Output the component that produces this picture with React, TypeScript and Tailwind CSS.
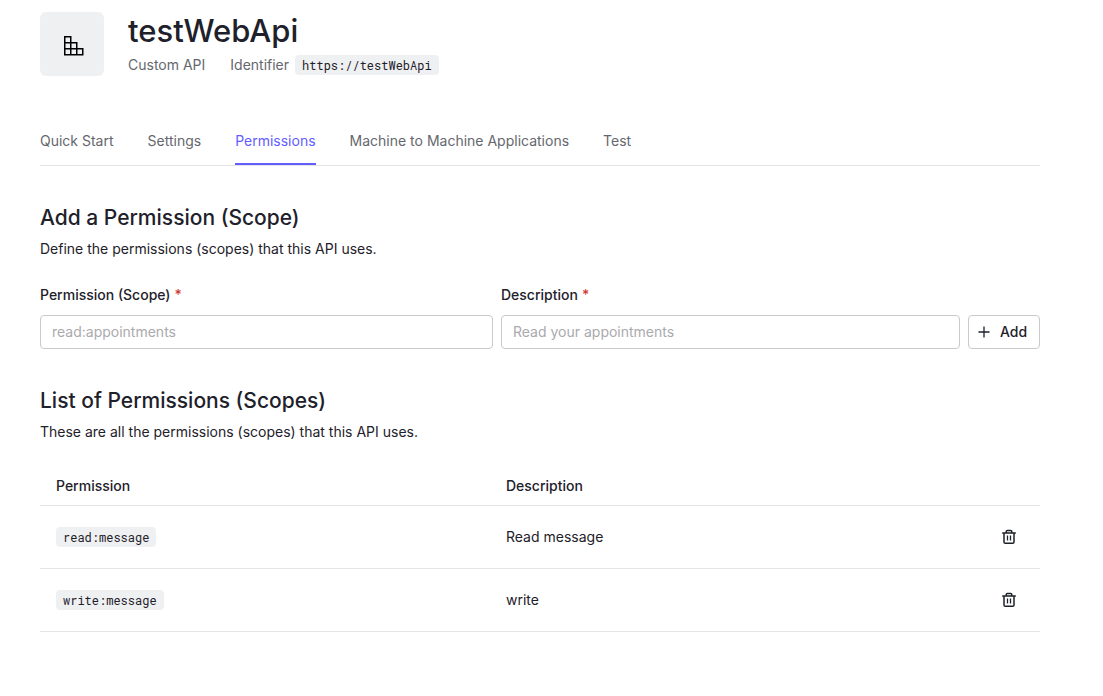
const tabs = ["Quick Start", "Settings", "Permissions", "Machine to Machine Applications", "Test"];

const permissions = [
  { scope: "read:message", description: "Read message" },
  { scope: "write:message", description: "write" },
];

function Code({ children }: { children: string }) {
  return (
    <code className="inline-block rounded bg-[#eff0f2] px-[7px] font-['Roboto_Mono','Liberation_Mono',monospace] text-xs leading-5 text-[#1e212a]">
      {children}
    </code>
  );
}

function ApiIcon() {
  return (
    <svg width="20" height="20" viewBox="0 0 20 20" fill="none" stroke="#000" strokeWidth="1.5" aria-hidden="true">
      <path d="M.75.75h6v18h-6zM.75 6.75h12v12M.75 12.75h18v6h-18zM12.75 12.75v6" />
    </svg>
  );
}

function TrashIcon() {
  return (
    <svg width="14" height="16" viewBox="0 0 14 16" fill="none" stroke="#1e212a" strokeWidth="1.5" aria-hidden="true">
      <path d="M.2 4h13.6M2 4v9c0 .7.55 1.25 1.25 1.25h7.5c.7 0 1.25-.55 1.25-1.25V4M4.25 4V2.5c0-.6.4-1 1-1h3.5c.6 0 1 .4 1 1V4" />
      <path d="M5.5 6.5v5M8.5 6.5v5" strokeWidth="1.3" />
    </svg>
  );
}

function Field({ id, label, placeholder }: { id: string; label: string; placeholder: string }) {
  return (
    <div className="min-w-0">
      <label htmlFor={id} className="mb-2.5 flex gap-1 font-medium">
        {label}
        <span className="text-[#d03c38]">*</span>
      </label>
      <input
        id={id}
        type="text"
        required
        placeholder={placeholder}
        className="block h-[34px] w-full rounded border border-[#c9cace] bg-white px-[11px] pb-0.5 placeholder:text-[#aaaaad]"
      />
    </div>
  );
}

function SectionTitle({ title, text }: { title: string; text: string }) {
  return (
    <div>
      <h2 className="text-[21px] leading-7 font-medium">{title}</h2>
      <p className="mt-[7px]">{text}</p>
    </div>
  );
}

export default function App() {
  return (
    <main className="max-w-[1080px] bg-white px-10 pt-3 pb-16 font-[Inter,sans-serif] text-sm leading-5 text-[#1e212a]">
      <header className="flex items-start gap-6">
        <div className="flex size-16 shrink-0 items-center justify-center rounded-md bg-[#eff0f2] pt-1 pl-1">
          <ApiIcon />
        </div>
        <div>
          <h1 className="text-[31px] leading-[38px] font-medium">testWebApi</h1>
          <div className="mt-[5px] flex flex-wrap gap-x-[25px] text-[#65676e]">
            <span>Custom API</span>
            <span className="flex gap-1.5">
              Identifier <Code>https://testWebApi</Code>
            </span>
          </div>
        </div>
      </header>

      <nav className="mt-[55px] flex flex-wrap gap-x-[34px] border-b border-[#e3e4e6]">
        {tabs.map((tab) => (
          <a
            key={tab}
            href="#"
            aria-current={tab === "Permissions" ? "page" : undefined}
            className={
              tab === "Permissions"
                ? "border-b-2 border-[#635dff] pb-3 text-[#635dff]"
                : "border-b-2 border-transparent pb-3 text-[#65676e]"
            }
          >
            {tab}
          </a>
        ))}
      </nav>

      <section className="mt-[38px]">
        <SectionTitle title="Add a Permission (Scope)" text="Define the permissions (scopes) that this API uses." />
        <form className="mt-[26px] grid grid-cols-[453fr_459fr_72px] items-end gap-2" onSubmit={(e) => e.preventDefault()}>
          <Field id="scope" label="Permission (Scope)" placeholder="read:appointments" />
          <Field id="description" label="Description" placeholder="Read your appointments" />
          <button type="submit" className="flex h-[34px] items-center gap-2.5 rounded border border-[#c9cace] pl-[9px] font-medium">
            <svg width="12" height="12" viewBox="0 0 12 12" stroke="#1e212a" strokeWidth="1.3" aria-hidden="true">
              <path d="M6 .5v11M.5 6h11" />
            </svg>
            Add
          </button>
        </form>
      </section>

      <section className="mt-[38px]">
        <SectionTitle title="List of Permissions (Scopes)" text="These are all the permissions (scopes) that this API uses." />
        <table className="mt-[25px] w-full table-fixed border-collapse text-left">
          <thead>
            <tr className="h-[38px] border-b border-[#e3e4e6]">
              <th scope="col" className="w-[45%] px-4 font-medium">Permission</th>
              <th scope="col" className="px-4 font-medium">Description</th>
              <td className="w-[62px]" />
            </tr>
          </thead>
          <tbody>
            {permissions.map(({ scope, description }) => (
              <tr key={scope} className="h-[63px] border-b border-[#e3e4e6]">
                <td className="px-4"><Code>{scope}</Code></td>
                <td className="px-4">{description}</td>
                <td>
                  <button type="button" aria-label={`Delete ${scope}`} className="mx-auto flex size-8 items-center justify-center">
                    <TrashIcon />
                  </button>
                </td>
              </tr>
            ))}
          </tbody>
        </table>
      </section>
    </main>
  );
}
